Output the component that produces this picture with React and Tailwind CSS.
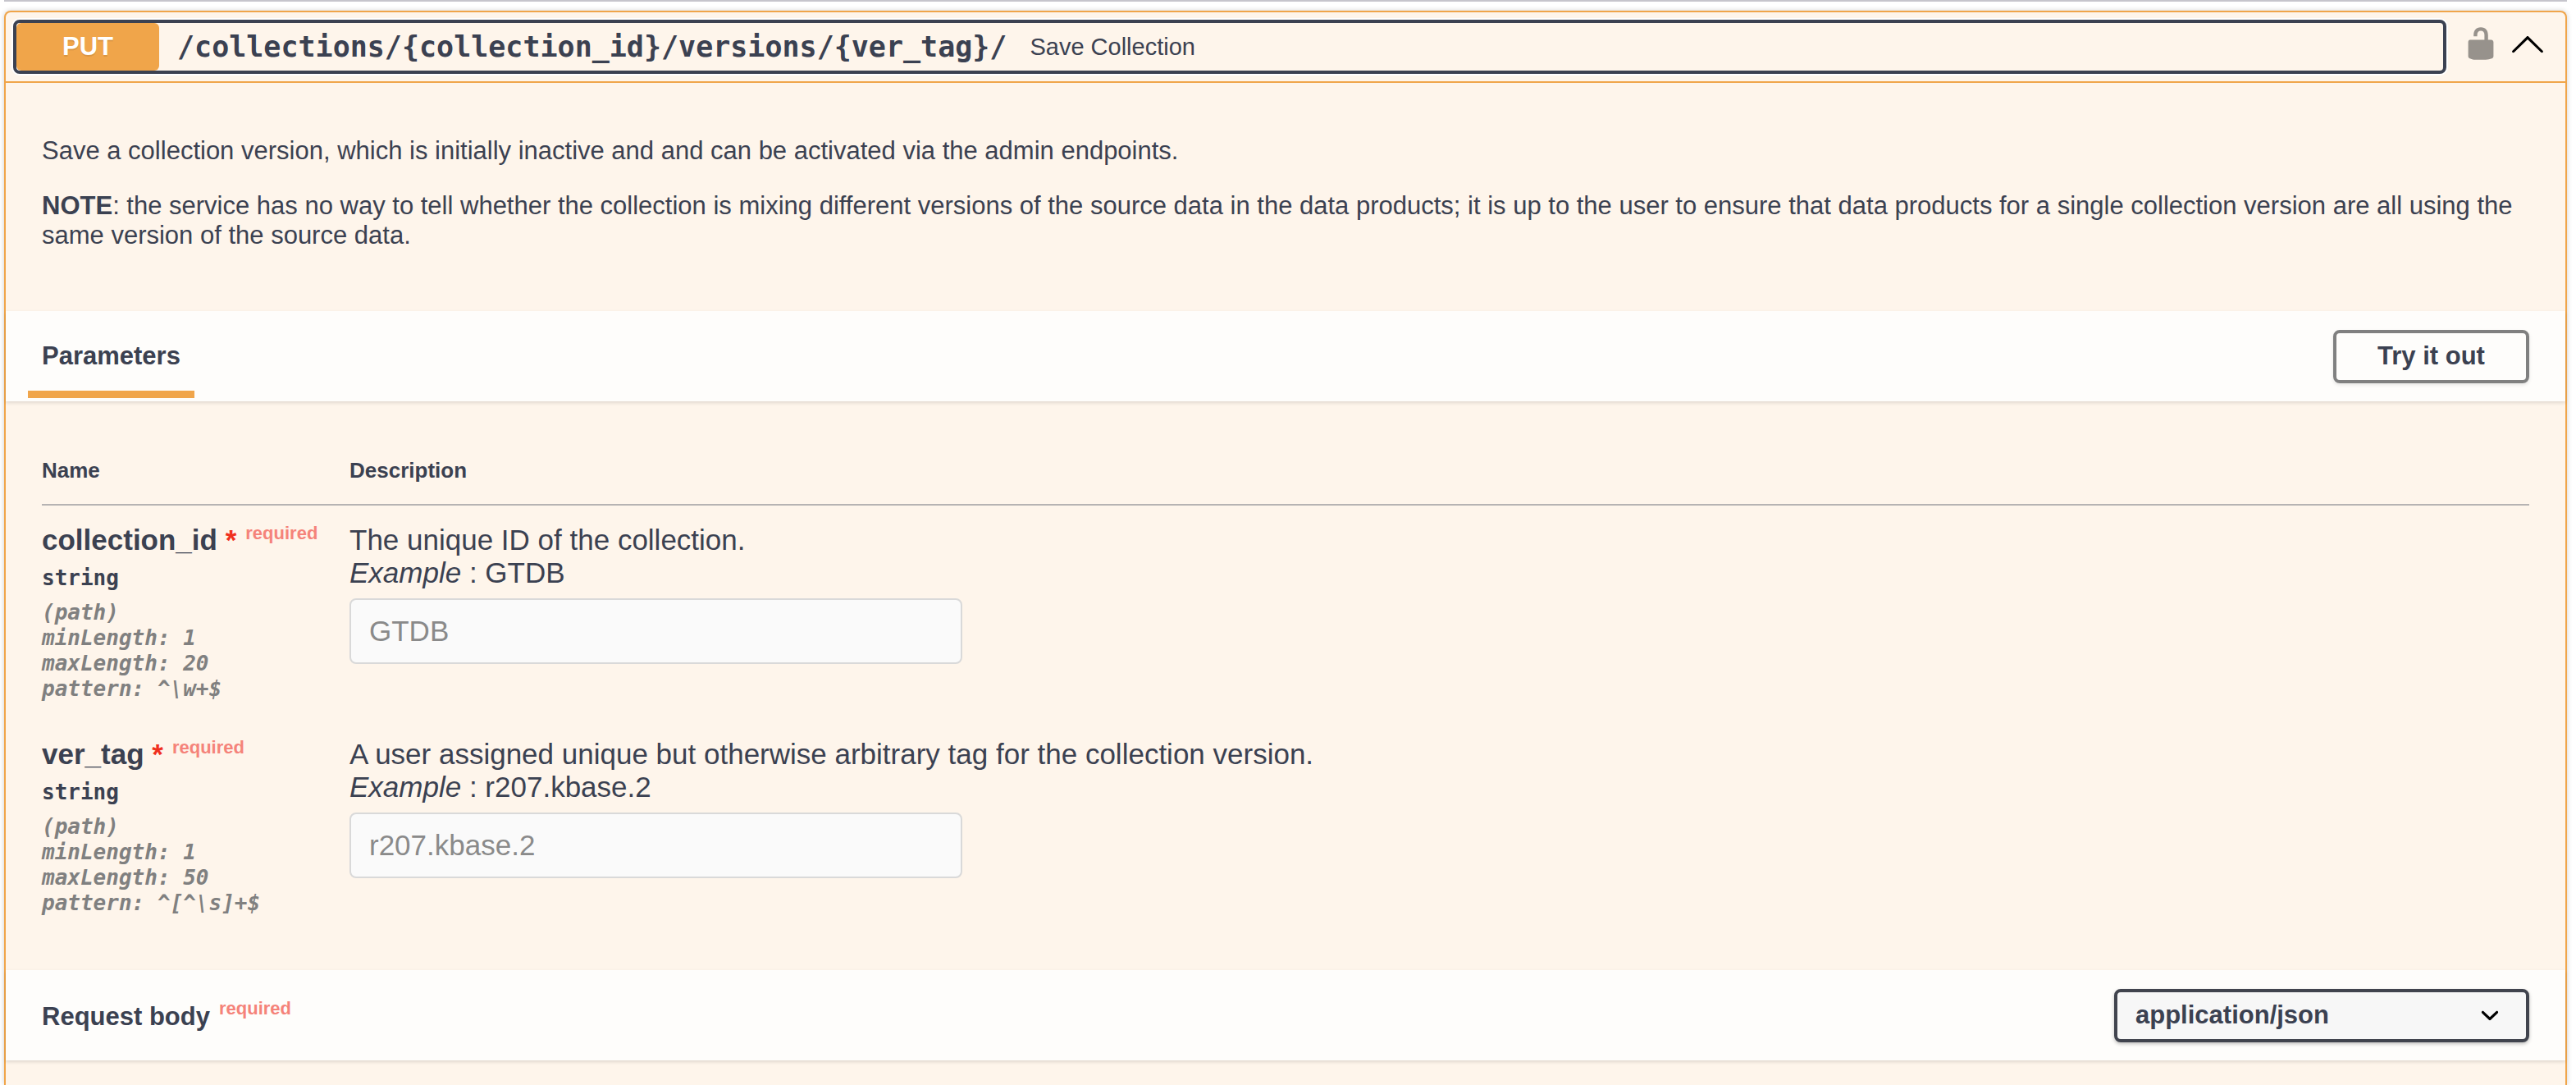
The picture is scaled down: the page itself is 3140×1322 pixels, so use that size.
const parameters = [
  {
    name: "collection_id",
    type: "string",
    meta: ["(path)", "minLength: 1", "maxLength: 20", "pattern: ^\\w+$"],
    description: "The unique ID of the collection.",
    example: "GTDB",
  },
  {
    name: "ver_tag",
    type: "string",
    meta: ["(path)", "minLength: 1", "maxLength: 50", "pattern: ^[^\\s]+$"],
    description: "A user assigned unique but otherwise arbitrary tag for the collection version.",
    example: "r207.kbase.2",
  },
];

function Required() {
  return (
    <span className="pl-[11px] align-[13px] text-[22px] leading-none font-bold text-[#f5837a]">required</span>
  );
}

function SectionBar({ children }) {
  return (
    <div className="flex min-h-[110px] justify-between bg-[#fefdfb] pr-11 shadow-[0_2px_4px_rgba(0,0,0,0.12)]">
      {children}
    </div>
  );
}

function OperationHeader() {
  return (
    <div className="flex items-center border-b-2 border-[#f0a54a] py-[9px] pr-6 pl-[9px]">
      <button
        type="button"
        aria-expanded="true"
        className="flex min-h-[66px] flex-1 items-stretch rounded-lg border-4 border-[#3b4151] text-left shadow-[0_0_0_2px_#ffffff]"
      >
        <span className="flex w-[174px] items-center justify-center rounded-md bg-[#f0a54a] text-[31px] leading-9 font-bold text-white [text-shadow:0_2px_0_rgba(0,0,0,0.1)]">
          PUT
        </span>
        <span className="flex items-center pl-[22px] font-['DejaVu_Sans_Mono',monospace] text-[35px] leading-10 font-bold">
          {"/collections/{collection_id}/versions/{ver_tag}/"}
        </span>
        <span className="flex items-center pl-7 text-[29px] leading-9">Save Collection</span>
      </button>
      <button type="button" aria-label="Authorize" className="ml-5 pb-2">
        <svg viewBox="0 0 20 20" className="block size-11 text-black opacity-40" fill="currentColor">
          <path d="M15.8 8H14V5.6C14 2.703 12.665 1 10 1 7.334 1 6 2.703 6 5.6V6h2v-.801C8 3.754 8.797 3 10 3c1.203 0 2 .754 2 2.199V8H4c-.553 0-1 .646-1 1.199V17c0 .549.428 1.139.951 1.307l1.197.387C5.672 18.861 6.55 19 7.1 19h5.8c.549 0 1.428-.139 1.951-.307l1.196-.387c.524-.167.953-.757.953-1.306V9.199C17 8.646 16.352 8 15.8 8z" />
        </svg>
      </button>
      <button type="button" aria-label="Collapse operation" className="ml-[13px] pb-2">
        <svg viewBox="0 0 20 20" className="block size-11 text-black" fill="currentColor">
          <path d="M17.418 14.908c.272.268.709.268.979 0s.271-.701 0-.969l-7.908-7.83c-.27-.268-.707-.268-.979 0l-7.908 7.83c-.27.268-.27.701 0 .969.271.268.709.268.979 0L10 7.767l7.418 7.141z" />
        </svg>
      </button>
    </div>
  );
}

function ParameterRow({ parameter }) {
  const id = `param-${parameter.name}`;
  return (
    <tr className="align-top">
      <td className="w-[375px] py-[22px]">
        <label htmlFor={id} className="block text-[35px] leading-10 font-bold whitespace-nowrap">
          {parameter.name}
          <span className="text-[#f0301e]">&nbsp;*</span>
          <Required />
        </label>
        <div className="mt-[11px] font-['DejaVu_Sans_Mono',monospace] text-[26px] leading-[31px] font-bold">
          {parameter.type}
        </div>
        <div className="mt-[11px] font-['DejaVu_Sans_Mono',monospace] text-[26px] leading-[31px] font-bold text-[#808080] italic">
          {parameter.meta.map((line) => (
            <div key={line}>{line}</div>
          ))}
        </div>
      </td>
      <td className="py-[22px] text-[35px] leading-10">
        <p>{parameter.description}</p>
        <p>
          <i>Example</i> : {parameter.example}
        </p>
        <input
          id={id}
          type="text"
          disabled
          placeholder={parameter.example}
          className="mt-[11px] block h-20 w-[747px] max-w-full rounded-lg border-2 border-[#d9d9d9] bg-[#fafafa] px-[22px] text-[35px] leading-10 placeholder:text-[#8a8a8a]"
        />
      </td>
    </tr>
  );
}

export default function App() {
  return (
    <div className="flex min-h-screen flex-col bg-white pr-[11px] pl-[5px] font-['Liberation_Sans',Arial,sans-serif] text-[#3b4151]">
      <div className="mb-[11px] h-0.5 bg-[#c6c5cc]" />
      <section className="flex-1 rounded-t-lg border-2 border-b-0 border-[#f0a54a] bg-[#fef5eb] shadow-[0_0_6px_rgba(0,0,0,0.19)]">
        <OperationHeader />

        <div className="flex flex-col gap-[31px] px-11 pt-[65px] pb-[74px] text-[31px] leading-9">
          <p>Save a collection version, which is initially inactive and and can be activated via the admin endpoints.</p>
          <p>
            <strong>NOTE</strong>: the service has no way to tell whether the collection is mixing different versions of
            the source data in the data products; it is up to the user to ensure that data products for a single
            collection version are all using the same version of the source data.
          </p>
        </div>

        <SectionBar>
          <h4 className="mt-[13px] mb-1 ml-[27px] flex items-center border-b-[9px] border-[#f0a54a] px-[17px] text-[31px] leading-9 font-bold">
            Parameters
          </h4>
          <button
            type="button"
            className="h-[65px] w-[239px] self-center rounded-lg border-4 border-[#808080] text-[31px] leading-9 font-bold shadow-[0_2px_4px_rgba(0,0,0,0.1)]"
          >
            Try it out
          </button>
        </SectionBar>

        <div className="px-11 pt-11 pb-11">
          <table className="w-full border-collapse">
            <thead>
              <tr className="text-left text-[26px] leading-[30px] font-bold">
                <th className="border-b-2 border-[#b6b3b3] pt-[25px] pb-[26px]">Name</th>
                <th className="border-b-2 border-[#b6b3b3] pt-[25px] pb-[26px]">Description</th>
              </tr>
            </thead>
            <tbody>
              {parameters.map((parameter) => (
                <ParameterRow key={parameter.name} parameter={parameter} />
              ))}
            </tbody>
          </table>
        </div>

        <SectionBar>
          <h4 className="flex items-center pl-11 text-[31px] leading-9 font-bold">
            <label htmlFor="content-type">
              Request body
              <Required />
            </label>
          </h4>
          <div className="relative flex items-center">
            <select
              id="content-type"
              className="h-[65px] w-[506px] appearance-none rounded-lg border-4 border-[#41444e] bg-[#f7f7f7] pl-[22px] text-[31px] leading-9 font-bold shadow-[0_2px_4px_rgba(0,0,0,0.25)]"
            >
              <option>application/json</option>
            </select>
            <svg
              viewBox="0 0 20 20"
              className="pointer-events-none absolute right-[26px] size-11 text-black"
              fill="currentColor"
            >
              <path d="M13.418 7.859c.271-.268.709-.268.978 0 .27.268.272.701 0 .969l-3.908 3.83c-.27.268-.707.268-.979 0l-3.908-3.83c-.27-.267-.27-.701 0-.969.271-.268.709-.268.978 0L10 11l3.418-3.141z" />
            </svg>
          </div>
        </SectionBar>
      </section>
    </div>
  );
}
